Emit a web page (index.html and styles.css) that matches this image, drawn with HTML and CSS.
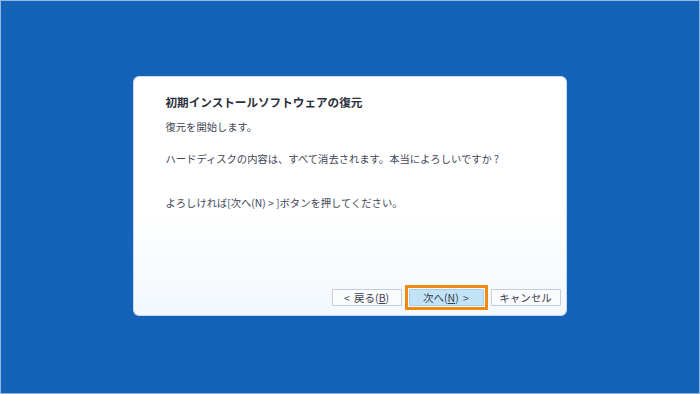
FILE: index.html
```html
<!DOCTYPE html>
<html lang="ja">
<head>
<meta charset="utf-8">
<link rel="stylesheet" href="styles.css">
</head>
<body>
<div class="screen">
  <div class="dialog">
    <div class="content">
      <h1 class="title">初期インストールソフトウェアの復元</h1>
      <p class="line l1">復元を開始します。</p>
      <p class="line l2">ハードディスクの内容は、すべて消去されます。本当によろしいですか ?</p>
      <p class="line l3">よろしければ[次へ(N) &gt; ]ボタンを押してください。</p>
    </div>
    <div class="buttons">
      <button class="btn">&lt; 戻る(<u>B</u>)</button>
      <div class="focus"><button class="btn primary">次へ(<u>N</u>) &gt;</button></div>
      <button class="btn">キャンセル</button>
    </div>
  </div>
</div>
</body>
</html>
```
FILE: styles.css
```css
html, body {
  margin: 0;
  padding: 0;
  width: 700px;
  height: 394px;
  overflow: hidden;
}
body {
  font-family: "Noto Sans CJK JP", "Noto Sans", sans-serif;
  background: #1564b8;
}
.screen {
  box-sizing: border-box;
  width: 700px;
  height: 394px;
  border: 1px solid #8fb8e6;
  background: #1463b8;
  display: flex;
  align-items: center;
  justify-content: center;
}
.dialog {
  box-sizing: border-box;
  width: 434px;
  height: 240px;
  margin-top: -2px;
  margin-left: -1px;
  border-radius: 6px;
  border: 1px solid #c4dcf2;
  background: linear-gradient(#ffffff 0%, #ffffff 55%, #f2f8fd 100%);
  display: flex;
  flex-direction: column;
  justify-content: space-between;
  padding: 18px 5px 5px 32px;
}
.title {
  margin: 0;
  font-size: 11.6px;
  font-weight: bold;
  color: #2b2f3c;
  line-height: 14px;
}
.line {
  margin: 0;
  font-size: 10.3px;
  color: #3f4656;
  line-height: 13px;
}
.l1 { margin-top: 11px; }
.l2 { margin-top: 19px; }
.l3 { margin-top: 31px; }
.buttons {
  display: flex;
  justify-content: flex-end;
  align-items: center;
  gap: 3px;
}
.btn {
  box-sizing: border-box;
  height: 17px;
  width: 70px;
  padding: 0;
  font-family: inherit;
  font-size: 10.5px;
  line-height: 15px;
  color: #3a4150;
  background: #fbfcfd;
  border: 1px solid #c6cdd6;
  border-radius: 1px;
  word-spacing: 2px;
}
.btn u { text-underline-offset: 1px; }
.focus {
  border: 3px solid #f0890f;
  padding: 1px;
  display: flex;
}
.primary {
  width: 75px;
  background: #c2e2f6;
  border-color: #a9cde8;
}
```
